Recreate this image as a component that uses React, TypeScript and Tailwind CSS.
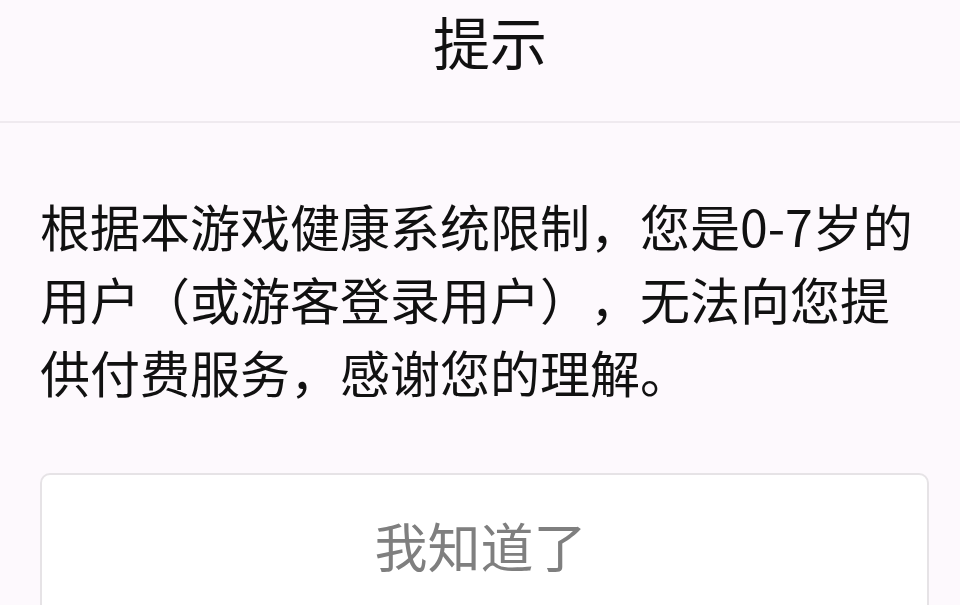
import React from "react";

export default function App() {
  const font = {
    fontFamily: '"Noto Sans CJK SC", "Noto Sans", sans-serif',
  };
  return (
    <div
      className="w-[960px] h-[605px] overflow-hidden bg-[#fdf9fd] flex flex-col [text-spacing-trim:space-all]"
      style={font}
    >
      <div className="h-[123px] shrink-0 flex items-center justify-center border-b-2 border-[#efeaef] pl-[20px]">
        <span className="text-[57px] leading-none text-[#111] -mt-[40px]">提示</span>
      </div>
      <div className="px-[40px] pt-[66px]">
        <p className="w-[882px] text-[50px] leading-[73px] text-[#111]">
          根据本游戏健康系统限制，您是0-7岁的用户（或游客登录用户），无法向您提供付费服务，感谢您的理解。
        </p>
        <div className="mt-[65px] w-[889px] h-[144px] bg-white border-2 border-[#e6e3e6] rounded-[10px] flex items-center justify-center">
          <span className="text-[53px] leading-none text-[#7f7f7f] ml-[-8px]">我知道了</span>
        </div>
      </div>
    </div>
  );
}
